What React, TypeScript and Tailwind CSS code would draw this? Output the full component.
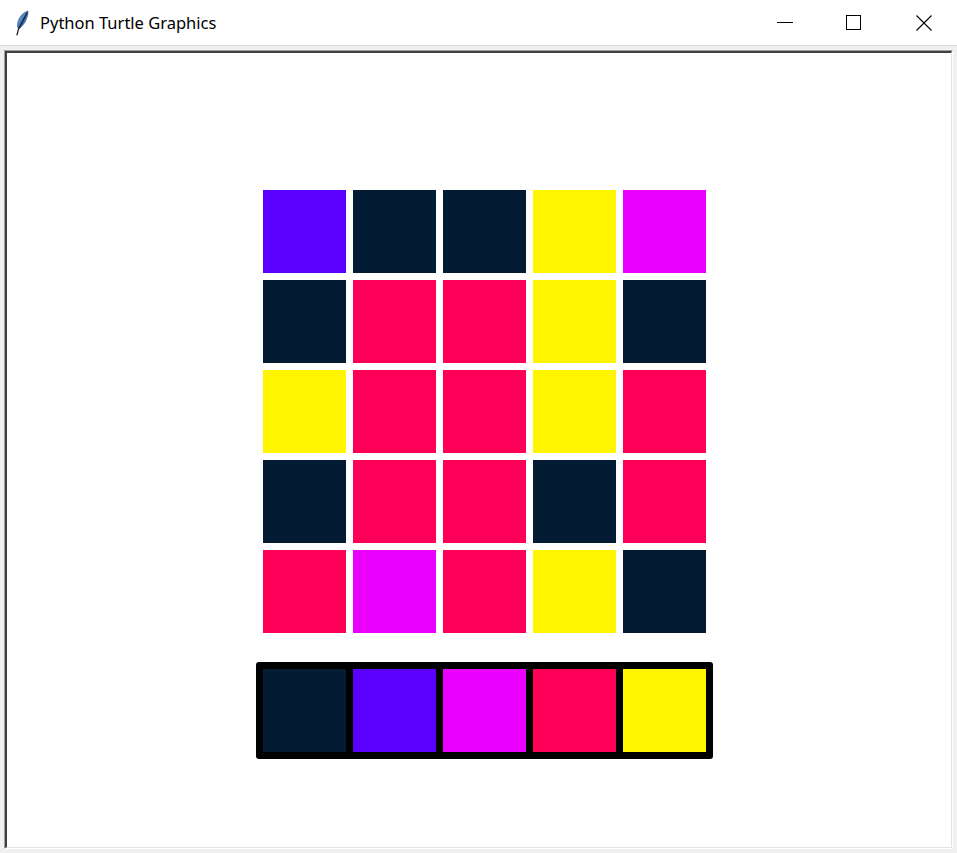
import React from "react";

const NAVY = "bg-[#041c33]";
const PURPLE = "bg-[#5900ff]";
const PINK = "bg-[#ff0059]";
const YELLOW = "bg-[#fff500]";
const MAGENTA = "bg-[#e900ff]";

const grid: string[][] = [
  [PURPLE, NAVY, NAVY, YELLOW, MAGENTA],
  [NAVY, PINK, PINK, YELLOW, NAVY],
  [YELLOW, PINK, PINK, YELLOW, PINK],
  [NAVY, PINK, PINK, NAVY, PINK],
  [PINK, MAGENTA, PINK, YELLOW, NAVY],
];

const palette = [NAVY, PURPLE, MAGENTA, PINK, YELLOW];

function Feather() {
  return (
    <svg width="16" height="26" viewBox="0 0 16 26">
      <defs>
        <linearGradient id="fg" x1="0" y1="0" x2="1" y2="1">
          <stop offset="0" stopColor="#9cc4f0" />
          <stop offset="0.5" stopColor="#3f78c4" />
          <stop offset="1" stopColor="#1d3f73" />
        </linearGradient>
      </defs>
      <path d="M14 1 C 8 3, 3 9, 3.5 17 L 5 19 C 10 15, 14 8, 14 1 Z" fill="url(#fg)" stroke="#2a4a78" strokeWidth="0.6" />
      <path d="M13 3 L 4.5 19 L 3 25" fill="none" stroke="#1b1b1b" strokeWidth="1.2" strokeLinecap="round" />
    </svg>
  );
}

export default function App() {
  return (
    <div className="w-[957px] h-[853px] bg-[#f0f0f0] flex flex-col overflow-hidden" style={{ fontFamily: '"Noto Sans", "Open Sans", sans-serif' }}>
      {/* Title bar */}
      <div className="h-[46px] bg-white border-b border-[#dadada] flex items-center shrink-0">
        <div className="w-[40px] flex justify-center pl-[4px]">
          <Feather />
        </div>
        <span className="text-[16.5px] text-black leading-none mt-[1px]">Python Turtle Graphics</span>
        <div className="ml-auto flex items-center h-full mr-[25px]">
          <div className="w-[16px] h-px bg-black" />
          <div className="ml-[53px] w-[15px] h-[15px] border border-black" />
          <svg className="ml-[55px]" width="16" height="16" viewBox="0 0 16 16">
            <path d="M0.5 0.5 L15.5 15.5 M15.5 0.5 L0.5 15.5" stroke="#000" strokeWidth="1.1" />
          </svg>
        </div>
      </div>

      {/* Canvas */}
      <div className="ml-[4px] mt-[4px] w-[949px] h-[799px] border-t border-l border-[#a0a0a0] border-r border-b border-r-white border-b-white">
        <div className="w-full h-full border-t-2 border-l-2 border-[#404040] border-r border-b border-r-[#e3e3e3] border-b-[#e3e3e3] bg-white pl-[249px] pt-[137px] flex flex-col">
          <div className="ml-[7px] grid grid-cols-[repeat(5,83px)] gap-[7px] w-max">
            {grid.flat().map((c, i) => (
              <div key={i} className={`w-[83px] h-[83px] ${c}`} />
            ))}
          </div>
          <div className="mt-[29px] w-max bg-black rounded-[3px] p-[7px] flex gap-[7px]">
            {palette.map((c, i) => (
              <div key={i} className={`w-[83px] h-[83px] ${c}`} />
            ))}
          </div>
        </div>
      </div>
    </div>
  );
}
